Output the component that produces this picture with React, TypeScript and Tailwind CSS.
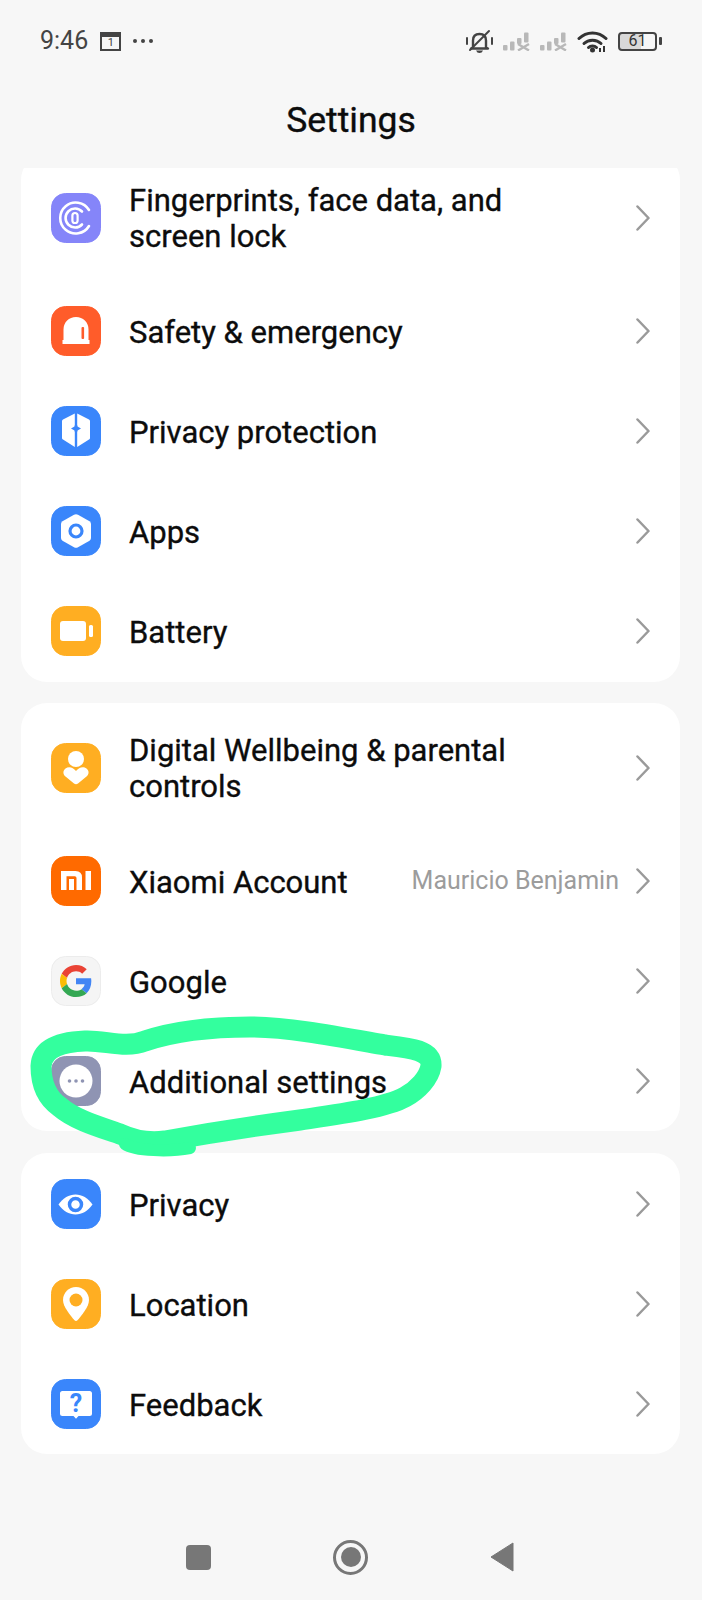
import type { ReactNode } from "react";

const BLUE = "#3a86fb";
const AMBER = "#ffae22";

function Squircle({ fill, children, stroke }: { fill: string; children: ReactNode; stroke?: string }) {
  return (
    <svg width="50" height="50" viewBox="0 0 50 50" className="shrink-0">
      <rect x="0.5" y="0.5" width="49" height="49" rx="14" fill={fill} stroke={stroke ?? fill} />
      {children}
    </svg>
  );
}

const FingerprintIcon = () => (
  <Squircle fill="#8585f9">
    <g fill="none" stroke="#fff" strokeWidth="2.6" strokeLinecap="round">
      <path d="M38 17A15.500 15.500 0 1 0 38 33" />
      <path d="M31 18.500A9.500 9.500 0 1 0 31 31.500" />
      <rect x="21.400" y="20" width="5.200" height="10" rx="2.600" strokeWidth="2.200" />
    </g>
  </Squircle>
);

const SafetyIcon = () => (
  <Squircle fill="#ff5c2a">
    <path d="M12.500 34V23.500C12.500 16 18 11 25 11S37.500 16 37.500 23.500V34H38.500V38H11.500V34Z" fill="#fff" />
    <rect x="30.500" y="21" width="2.600" height="12" rx="1" fill="#ff5c2a" />
  </Squircle>
);

const PrivacyProtectionIcon = () => (
  <Squircle fill={BLUE}>
    <path d="M23.800 7.500L12 13.500Q11 14 11 15V32Q11 33 12 33.600L23.800 41Z" fill="#fff" />
    <path d="M26.200 7.500L38 13.500Q39 14 39 15V32Q39 33 38 33.600L26.200 41Z" fill="#fff" />
    <path d="M25 15L26.500 20.500L30 22.500L26.500 24.500L25 30L23.500 24.500L20 22.500L23.500 20.500Z" fill={BLUE} />
  </Squircle>
);

const AppsIcon = () => (
  <Squircle fill={BLUE}>
    <path d="M23 8.700Q25 7.600 27 8.700L38.500 15.300Q40 16.200 40 18V32Q40 33.800 38.500 34.700L27 41.300Q25 42.400 23 41.300L11.500 34.700Q10 33.800 10 32V18Q10 16.200 11.500 15.300Z" fill="#fff" />
    <circle cx="25" cy="25" r="6" fill="none" stroke={BLUE} strokeWidth="3.200" />
  </Squircle>
);

const BatteryIcon = () => (
  <Squircle fill={AMBER}>
    <rect x="9" y="15" width="26" height="20" rx="3" fill="#fff" />
    <rect x="38" y="19" width="4" height="12" rx="1.500" fill="#fff" />
  </Squircle>
);

const WellbeingIcon = () => (
  <Squircle fill={AMBER}>
    <circle cx="25" cy="16" r="8" fill="#fff" />
    <path d="M25 28C22 24 17.500 23 14.500 25.500C11.500 28 12 31.500 14.500 33.500L23 40.500Q25 42 27 40.500L35.500 33.500C38 31.500 38.500 28 35.500 25.500C32.500 23 28 24 25 28Z" fill="#fff" />
  </Squircle>
);

const XiaomiIcon = () => (
  <Squircle fill="#ff6a00">
    <path d="M10 15H24.500Q31 15 31 21.500V34H25.500V22Q25.500 20.300 23.800 20.300H15.500V34H10Z" fill="#fff" />
    <rect x="18" y="23" width="5" height="11" fill="#fff" />
    <rect x="34.500" y="15" width="5.500" height="19" fill="#fff" />
  </Squircle>
);

const GoogleIcon = () => (
  <Squircle fill="#f5f5f5" stroke="#ececec">
    <g transform="translate(9 9) scale(0.667)">
      <path fill="#EA4335" d="M24 9.500c3.540 0 6.710 1.220 9.210 3.600l6.850-6.850C35.900 2.380 30.470 0 24 0 14.620 0 6.510 5.380 2.560 13.220l7.980 6.190C12.430 13.720 17.740 9.500 24 9.500z" />
      <path fill="#4285F4" d="M46.980 24.550c0-1.570-.15-3.090-.38-4.550H24v9.020h12.940c-.58 2.960-2.260 5.480-4.780 7.180l7.730 6c4.510-4.180 7.090-10.360 7.090-17.650z" />
      <path fill="#FBBC05" d="M10.530 28.590c-.48-1.450-.76-2.990-.76-4.590s.27-3.140.76-4.590l-7.980-6.190C.92 16.460 0 20.120 0 24c0 3.880.92 7.540 2.560 10.780l7.970-6.190z" />
      <path fill="#34A853" d="M24 48c6.480 0 11.930-2.130 15.890-5.810l-7.730-6c-2.150 1.450-4.920 2.300-8.160 2.300-6.260 0-11.570-4.220-13.470-9.910l-7.980 6.190C6.510 42.620 14.620 48 24 48z" />
    </g>
  </Squircle>
);

const MoreIcon = () => (
  <Squircle fill="#8f94b3">
    <circle cx="25" cy="25" r="16.500" fill="#fff" />
    <circle cx="18.500" cy="25" r="1.800" fill="#8f94b3" />
    <circle cx="25" cy="25" r="1.800" fill="#8f94b3" />
    <circle cx="31.500" cy="25" r="1.800" fill="#8f94b3" />
  </Squircle>
);

const EyeIcon = () => (
  <Squircle fill={BLUE}>
    <path d="M7.500 25.500C12 19 18 15.500 24.500 15.500S37 19 41.500 25.500C37 32 31 35.500 24.500 35.500S12 32 7.500 25.500Z" fill="#fff" />
    <circle cx="24.500" cy="25.500" r="6" fill="none" stroke={BLUE} strokeWidth="3.500" />
  </Squircle>
);

const PinIcon = () => (
  <Squircle fill={AMBER}>
    <path d="M25 8C17.800 8 12 13.800 12 21C12 27.500 19 36 23.500 41.300Q25 42.800 26.500 41.300C31 36 38 27.500 38 21C38 13.800 32.200 8 25 8Z" fill="#fff" />
    <circle cx="25" cy="21" r="6.500" fill={AMBER} />
  </Squircle>
);

const FeedbackIcon = () => (
  <Squircle fill={BLUE}>
    <path d="M11.500 12H38.500Q41 12 41 14.500V34.500Q41 37 38.500 37H27.500L25 39.800L22.500 37H11.500Q9 37 9 34.500V14.500Q9 12 11.500 12Z" fill="#fff" />
    <text x="25" y="33" textAnchor="middle" fontFamily="Roboto, sans-serif" fontWeight="700" fontSize="25" fill={BLUE}>?</text>
  </Squircle>
);

type Item = { icon: ReactNode; label: ReactNode; value?: string; tall?: boolean };

const groups: { className: string; items: Item[] }[] = [
  {
    className: "pb-[1px]",
    items: [
      { icon: <FingerprintIcon />, label: <>Fingerprints, face data, and<br />screen lock</>, tall: true },
      { icon: <SafetyIcon />, label: "Safety & emergency" },
      { icon: <PrivacyProtectionIcon />, label: "Privacy protection" },
      { icon: <AppsIcon />, label: "Apps" },
      { icon: <BatteryIcon />, label: "Battery" },
    ],
  },
  {
    className: "pt-[1px]",
    items: [
      { icon: <WellbeingIcon />, label: <>Digital Wellbeing &amp; parental<br />controls</>, tall: true },
      { icon: <XiaomiIcon />, label: "Xiaomi Account", value: "Mauricio Benjamin" },
      { icon: <GoogleIcon />, label: "Google" },
      { icon: <MoreIcon />, label: "Additional settings" },
    ],
  },
  {
    className: "mt-[1px] pt-[1px]",
    items: [
      { icon: <EyeIcon />, label: "Privacy" },
      { icon: <PinIcon />, label: "Location" },
      { icon: <FeedbackIcon />, label: "Feedback" },
    ],
  },
];

function Row({ item }: { item: Item }) {
  return (
    <div className={`flex items-center pl-[30px] pr-[30px] ${item.tall ? "h-[127px]" : "h-[100px]"}`}>
      {item.icon}
      <div className="ml-[28px] flex-1 pt-[3px] text-[31px] leading-[36px] text-[#0c0c0c] [-webkit-text-stroke:0.35px_#0c0c0c]">{item.label}</div>
      {item.value && <span className="mr-[17px] text-[25px] text-[#9c9c9c]">{item.value}</span>}
      <svg width="14" height="26" viewBox="0 0 14 26" className="shrink-0">
        <path d="M1.500 1.500L12.500 13L1.500 24.500" fill="none" stroke="#9a9a9a" strokeWidth="2.500" strokeLinecap="round" strokeLinejoin="round" />
      </svg>
    </div>
  );
}

function SignalIcon() {
  return (
    <svg width="30" height="19" viewBox="0 0 30 19">
      <g fill="#b8b8b8">
        <rect x="0" y="13" width="4.500" height="5.500" rx="1" />
        <rect x="7" y="9.500" width="4.500" height="9" rx="1" />
        <rect x="14" y="6" width="4.500" height="6" rx="1" />
        <rect x="21" y="0.500" width="4.500" height="10" rx="1" />
      </g>
      <path d="M15 12L26 18.500M26 12L15 18.500" stroke="#b8b8b8" strokeWidth="2.400" />
    </svg>
  );
}

function StatusBar() {
  return (
    <div className="flex h-[82px] items-center justify-between pl-[40px] pr-[40px] text-[#444]">
      <div className="flex items-center">
        <span className="text-[25px]">9:46</span>
        <div className="ml-[12px] flex h-[19px] w-[21px] items-end justify-center border-2 border-t-[5px] border-[#444] text-[11px] leading-[12px]">1</div>
        <div className="ml-[12px] flex gap-[4px]">
          <span className="h-[4px] w-[4px] rounded-full bg-[#444]" />
          <span className="h-[4px] w-[4px] rounded-full bg-[#444]" />
          <span className="h-[4px] w-[4px] rounded-full bg-[#444]" />
        </div>
      </div>
      <div className="flex items-center">
        <svg width="29" height="25" viewBox="0 0 29 25">
          <g fill="none" stroke="#444" strokeWidth="2.400" strokeLinecap="round" strokeLinejoin="round">
            <path d="M8 18.500V11.500C8 7.500 10.500 5 14.500 5S21 7.500 21 11.500V18.500L23 19.500H6Z" />
            <path d="M5 21L24 2" strokeWidth="2" />
            <path d="M2 9V15M27 9V15" strokeWidth="2" />
          </g>
          <path d="M11 21.500H18Q17 24 14.500 24T11 21.500Z" fill="#444" />
        </svg>
        <div className="ml-[9px] flex gap-[7px]">
          <SignalIcon />
          <SignalIcon />
        </div>
        <svg width="31" height="23" viewBox="0 0 31 23" className="ml-[7px]">
          <g fill="none" stroke="#333" strokeWidth="3" strokeLinecap="round">
            <path d="M2 8.500C9.500 1 21.500 1 29 8.500" />
            <path d="M7 13.500C11.500 9 19.500 9 24 13.500" />
            <path d="M11.500 17.500C13.500 15.500 17.500 15.500 19.500 17.500" />
          </g>
          <circle cx="15.500" cy="20" r="2.500" fill="#333" />
          <path d="M23 18V22M27 16V22" stroke="#333" strokeWidth="2" />
        </svg>
        <div className="ml-[10px] flex h-[19px] w-[39px] items-center justify-center rounded-[4px] border-2 border-[#444] bg-[linear-gradient(90deg,#d8d8d8_60%,transparent_60%)] text-[16px] leading-none text-[#333]">61</div>
        <span className="ml-[2px] h-[8px] w-[3px] rounded-[1px] bg-[#444]" />
      </div>
    </div>
  );
}

export default function App() {
  return (
    <div className="relative flex h-[1600px] w-[702px] flex-col overflow-hidden bg-[#f7f7f7] font-['Roboto',sans-serif]">
      <StatusBar />
      <h1 className="mb-[9px] flex h-[77px] items-center justify-center pt-[1px] text-[35.500px] text-[#0c0c0c] [-webkit-text-stroke:0.4px_#0c0c0c]">Settings</h1>

      <main className="flex-1 overflow-hidden">
        <div className="-mt-[14px] flex flex-col gap-[21px]">
          {groups.map((group, i) => (
            <section key={i} className={`ml-[21px] mr-[22px] overflow-hidden rounded-[26px] bg-white ${group.className}`}>
              {group.items.map((item, j) => (
                <Row key={j} item={item} />
              ))}
            </section>
          ))}
        </div>
      </main>

      <nav className="flex h-[86px] items-center justify-center gap-[122px] pr-[2px]">
        <span className="h-[25px] w-[25px] rounded-[4px] bg-[#777]" />
        <span className="flex h-[35px] w-[35px] items-center justify-center rounded-full border-[3px] border-[#777]">
          <span className="h-[20px] w-[20px] rounded-full bg-[#777]" />
        </span>
        <svg width="24" height="30" viewBox="0 0 24 30">
          <path d="M1 15L23 1V29Z" fill="#777" stroke="#777" strokeWidth="1" strokeLinejoin="round" />
        </svg>
      </nav>

      {/* hand-drawn marker highlight over the row */}
      <svg width="702" height="1600" viewBox="0 0 702 1600" className="pointer-events-none absolute left-0 top-0">
        <path
          d="M41 1066C42 1048 60 1042 85 1041C105 1040 125 1049 145 1041C175 1031 215 1027 250 1027C290 1027 340 1037 385 1045C410 1048 432 1050 431 1066C429 1078 418 1090 405 1097C385 1108 340 1114 300 1120C255 1126 210 1133 165 1141C150 1143 135 1141 120 1134C100 1127 75 1120 60 1107C47 1098 41 1085 41 1066Z"
          fill="none"
          stroke="#33ff9e"
          strokeWidth="21"
          strokeLinejoin="round"
        />
        <path d="M125 1144C135 1151 170 1152 190 1148" fill="none" stroke="#33ff9e" strokeWidth="12" strokeLinecap="round" />
      </svg>
    </div>
  );
}
